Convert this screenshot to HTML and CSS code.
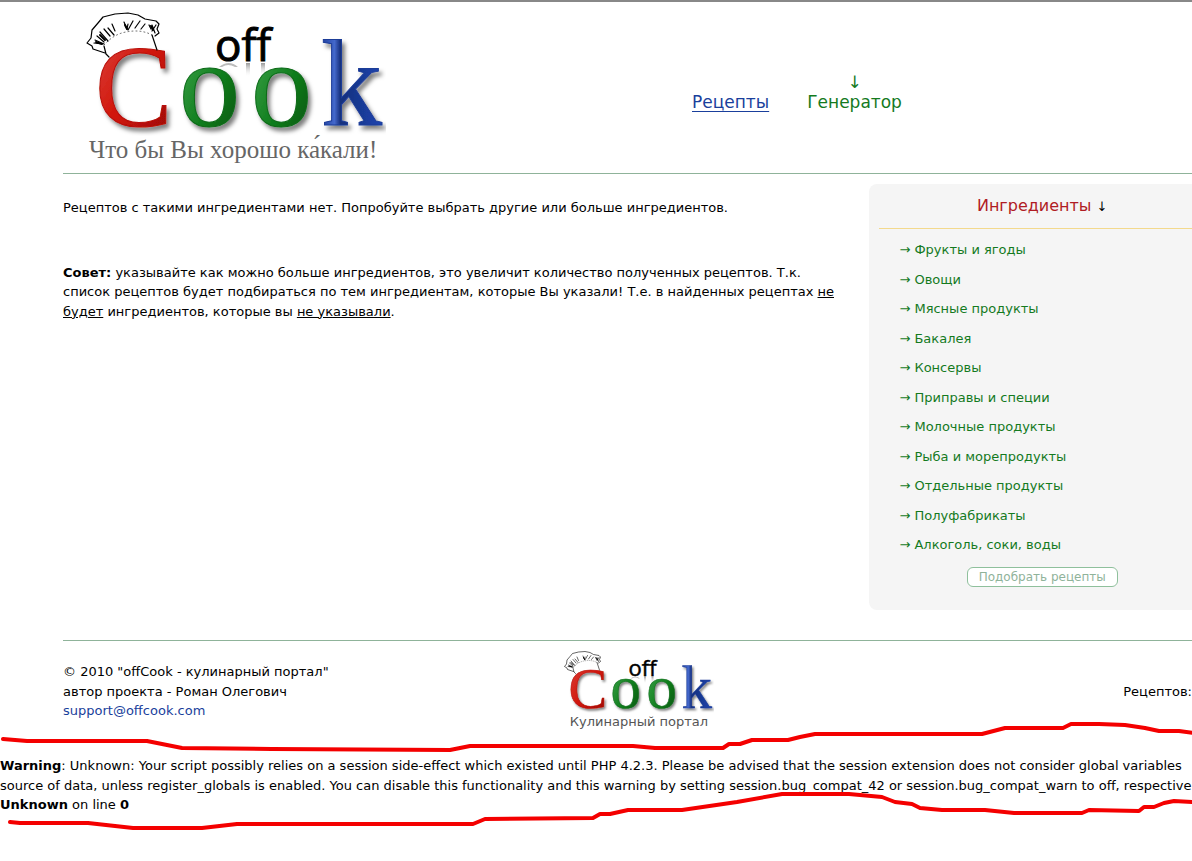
FILE: index.html
```
<!DOCTYPE html>
<html lang="ru">
<head>
    <meta charset="UTF-8">
    <meta name="viewport" content="width=device-width, initial-scale=1.0">
    <title>offCook - кулинарный портал</title>
    <link rel="stylesheet" href="styles.css">
</head>
<body>
    <div class="page">
        <header class="header">
            <a href="#" class="logo">
                <svg class="logo-big" viewBox="0 0 300 124" role="img" aria-label="offCook">
                    <defs>
                        <linearGradient id="red" x1="0" y1="0" x2="1" y2="1">
                            <stop offset="0" stop-color="#a01008"/>
                            <stop offset="0.2" stop-color="#d8342c"/>
                            <stop offset="0.5" stop-color="#d01408"/>
                            <stop offset="1" stop-color="#900c06"/>
                        </linearGradient>
                        <linearGradient id="green" x1="0" y1="0" x2="1" y2="1">
                            <stop offset="0" stop-color="#0a5a14"/>
                            <stop offset="0.3" stop-color="#2c9438"/>
                            <stop offset="0.6" stop-color="#0c7a1a"/>
                            <stop offset="1" stop-color="#064a0c"/>
                        </linearGradient>
                        <linearGradient id="blue" x1="0" y1="0" x2="1" y2="0">
                            <stop offset="0" stop-color="#1c3c98"/>
                            <stop offset="0.22" stop-color="#4468cc"/>
                            <stop offset="0.32" stop-color="#16307c"/>
                            <stop offset="1" stop-color="#1c44b0"/>
                        </linearGradient>
                        <linearGradient id="fade" x1="0" y1="0" x2="0" y2="1">
                            <stop offset="0" stop-color="#999"/>
                            <stop offset="1" stop-color="#fff" stop-opacity="0"/>
                        </linearGradient>
                        <filter id="shadow" x="-10%" y="-10%" width="130%" height="130%">
                            <feDropShadow dx="3" dy="4" stdDeviation="2" flood-color="#000" flood-opacity="0.5"/>
                        </filter>
                        <g id="cook">
                            <!-- reflection under "off" -->
                            <path d="M133 55q10-8 19 0l-3 0q-7-4-13 0z" fill="#bbb"/>
                            <path d="M160 51h4v14h-4zM175 51h4v12h-4z" fill="url(#fade)"/>
                            <text class="logo-off" x="129" y="49">off</text>
                            <g class="logo-letters" filter="url(#shadow)">
                                <text class="logo-c" x="9" y="114" fill="url(#red)" stroke="#b81008">C</text>
                                <text x="93" y="114" fill="url(#green)" stroke="#0a6a18">o</text>
                                <text x="165" y="114" fill="url(#green)" stroke="#0a6a18">o</text>
                                <text x="235" y="113" fill="url(#blue)" stroke="#1c3c98">k</text>
                            </g>
                            <!-- chef hat -->
                            <g fill="none" stroke="#000" stroke-width="1.2" stroke-linecap="round" stroke-linejoin="round">
                                <path d="M19 41L10 38L7 37L6 34L1 31L5 26L6 18L12 11L17 5L29 2L42 1L52 3L59 7L70 9L73 12L71 17L73 21L69 24M66 23L71 38M18 34L20 42L23 45"/>
                                <path d="M18 33Q28 22 40 20Q55 17 66 23" stroke-width="0.6" stroke-dasharray="1 3"/>
                                <path d="M8 31l8 1M9 28l9 4M11 24l7 6M14 20l8 9M18 17l6 7M22 16l6 7M26 12l3 7M38 10l3 7M42 12l-1 5M47 9l-5 9M54 9l-5 7M59 12l-4 5M63 13l2 4M70 13l-4 6M66 13l3 8"/>
                                <path d="M10 30l6 2M14 23l5 5M39 13l2 4M65 14l2 4" stroke-width="2"/>
                            </g>
                        </g>
                    </defs>
                    <use href="#cook"/>
                </svg>
                <span class="slogan">Что бы Вы хорошо ка́кали!</span>
            </a>
            <nav class="menu">
                <a href="#" class="menu-link">Рецепты</a>
                <a href="#" class="menu-link active"><span>↓</span>Генератор</a>
            </nav>
        </header>

        <main class="main">
            <section class="content">
                <p>Рецептов с такими ингредиентами нет. Попробуйте выбрать другие или больше ингредиентов.</p>
                <p class="tip"><b>Совет:</b> указывайте как можно больше ингредиентов, это увеличит количество полученных рецептов. Т.к.<br>
                список рецептов будет подбираться по тем ингредиентам, которые Вы указали! Т.е. в найденных рецептах <u>не</u><br>
                <u>будет</u> ингредиентов, которые вы <u>не указывали</u>.</p>
            </section>

            <aside class="sidebar">
                <h2>Ингредиенты <span>↓</span></h2>
                <ul>
                    <li><a href="#">→ Фрукты и ягоды</a></li>
                    <li><a href="#">→ Овощи</a></li>
                    <li><a href="#">→ Мясные продукты</a></li>
                    <li><a href="#">→ Бакалея</a></li>
                    <li><a href="#">→ Консервы</a></li>
                    <li><a href="#">→ Приправы и специи</a></li>
                    <li><a href="#">→ Молочные продукты</a></li>
                    <li><a href="#">→ Рыба и морепродукты</a></li>
                    <li><a href="#">→ Отдельные продукты</a></li>
                    <li><a href="#">→ Полуфабрикаты</a></li>
                    <li><a href="#">→ Алкоголь, соки, воды</a></li>
                </ul>
                <button type="button" class="pick">Подобрать рецепты</button>
            </aside>
        </main>

        <footer class="footer">
            <div class="copyright">
                © 2010 "offCook - кулинарный портал"<br>
                автор проекта - Роман Олегович<br>
                <a href="#">support@offcook.com</a>
            </div>
            <div class="footer-logo">
                <svg class="logo-small" viewBox="0 0 300 124" role="img" aria-label="offCook">
                    <use href="#cook"/>
                </svg>
                <span>Кулинарный портал</span>
            </div>
            <div class="stats">Рецептов:</div>
        </footer>
    </div>

    <div class="warning">
        <p><b>Warning</b>: Unknown: Your script possibly relies on a session side-effect which existed until PHP 4.2.3. Please be advised that the session extension does not consider global variables<br>
        source of data, unless register_globals is enabled. You can disable this functionality and this warning by setting session.bug_compat_42 or session.bug_compat_warn to off, respectively<br>
        <b>Unknown</b> on line <b>0</b></p>
        <svg class="marker" viewBox="0 720 1192 120" aria-hidden="true">
            <polyline points="3,739 27,741 147,741 182,748 272,749 450,750 470,746 633,746 655,748 723,748 729,744 740,744 752,740 788,740 800,737 815,734 982,734 1005,728 1063,728 1071,724 1099,724 1125,725 1145,728 1159,731 1179,731 1194,733"/>
            <polyline points="10,822 20,823 88,823 133,828 202,828 237,824 473,824 485,819 593,818 600,814 610,814 628,810 682,810 737,802 782,794 849,794 882,797 895,802 912,804 920,808 942,810 985,810 1014,813 1082,813 1089,810 1139,811 1144,807 1154,807 1164,803 1174,801 1194,802"/>
        </svg>
    </div>
</body>
</html>
```
FILE: styles.css
```
* {
    margin: 0;
    padding: 0;
    box-sizing: border-box;
}

body {
    min-height: 100vh;
    overflow-x: hidden;
    border-top: 2px solid #888;
    background: #fff;
    color: #000;
    font-family: Verdana, 'DejaVu Sans', sans-serif;
    font-size: 13px;
    line-height: 1.5;
}

a {
    color: #1a3f9c;
    text-decoration: none;
}

.page {
    margin: 0 -23px 0 63px;
}

.header {
    display: flex;
    height: 172px;
    padding: 10px 0 0 23px;
    border-bottom: 1px solid #8fb39a;
}

.logo {
    width: 300px;
}

.logo-big {
    display: block;
    width: 300px;
    height: 124px;
}

.logo-off {
    font-family: 'Open Sans', sans-serif;
    font-size: 44px;
    stroke: #000;
    stroke-width: 1px;
}

.logo-letters {
    font-family: 'Liberation Serif', serif;
    font-size: 122px;
    stroke-width: 1px;
}

.logo-c {
    font-size: 116px;
}

.slogan {
    display: block;
    padding-left: 3px;
    color: #666;
    font-family: 'Liberation Serif', serif;
    font-size: 25px;
    line-height: 28px;
    white-space: nowrap;
}

.menu {
    display: flex;
    align-items: flex-end;
    gap: 38px;
    height: 100px;
    margin-left: 306px;
    font-size: 17px;
    line-height: 20px;
}

.menu-link {
    text-decoration: underline;
    text-underline-offset: 3px;
}

.menu-link.active {
    color: #147a1e;
    text-align: center;
    text-decoration: none;
}

.menu-link span {
    display: block;
}

.main {
    display: flex;
    align-items: flex-start;
    justify-content: space-between;
    padding: 10px 0 30px;
}

.content {
    padding-top: 14px;
    white-space: nowrap;
}

.tip {
    margin-top: 45px;
}

.sidebar {
    width: 30%;
    height: 426px;
    padding: 10px;
    border-radius: 8px;
    background: #f5f5f5;
    text-align: center;
}

.sidebar h2 {
    height: 35px;
    border-bottom: 1px solid #f3d98c;
    color: #b01c24;
    font-size: 16px;
    font-weight: normal;
    line-height: 24px;
}

.sidebar h2 span {
    color: #000;
    font-size: 13px;
}

.sidebar ul {
    padding: 11px 20px 0;
    list-style: none;
    text-align: left;
}

.sidebar li {
    margin-bottom: 10px;
}

.sidebar li a {
    color: #147a1e;
}

.pick {
    height: 20px;
    margin-top: 2px;
    padding: 0 11px;
    border: 1px solid #8fc09c;
    border-radius: 6px;
    background: #fff;
    color: #8fb39a;
    font: inherit;
    font-size: 12px;
    line-height: 18px;
}

.footer {
    display: grid;
    grid-template-columns: 1fr 150px 1fr;
    height: 80px;
    border-top: 1px solid #8fb39a;
}

.copyright {
    padding-top: 21px;
}

.footer-logo {
    padding-top: 10px;
    text-align: center;
    color: #555;
}

.logo-small {
    display: block;
    width: 150px;
    height: 62px;
}

.footer-logo span {
    display: block;
    line-height: 18px;
    white-space: nowrap;
}

.stats {
    padding: 41px 23px 0 0;
    text-align: right;
}

.warning {
    position: relative;
    min-height: 120px;
    padding-top: 36px;
    white-space: nowrap;
}

/* hand-drawn red lines around the warning */
.marker {
    position: absolute;
    top: 0;
    left: 0;
    width: 1192px;
    height: 120px;
    fill: none;
    stroke: #f40000;
    stroke-width: 4;
    stroke-linecap: round;
    stroke-linejoin: round;
}
```
